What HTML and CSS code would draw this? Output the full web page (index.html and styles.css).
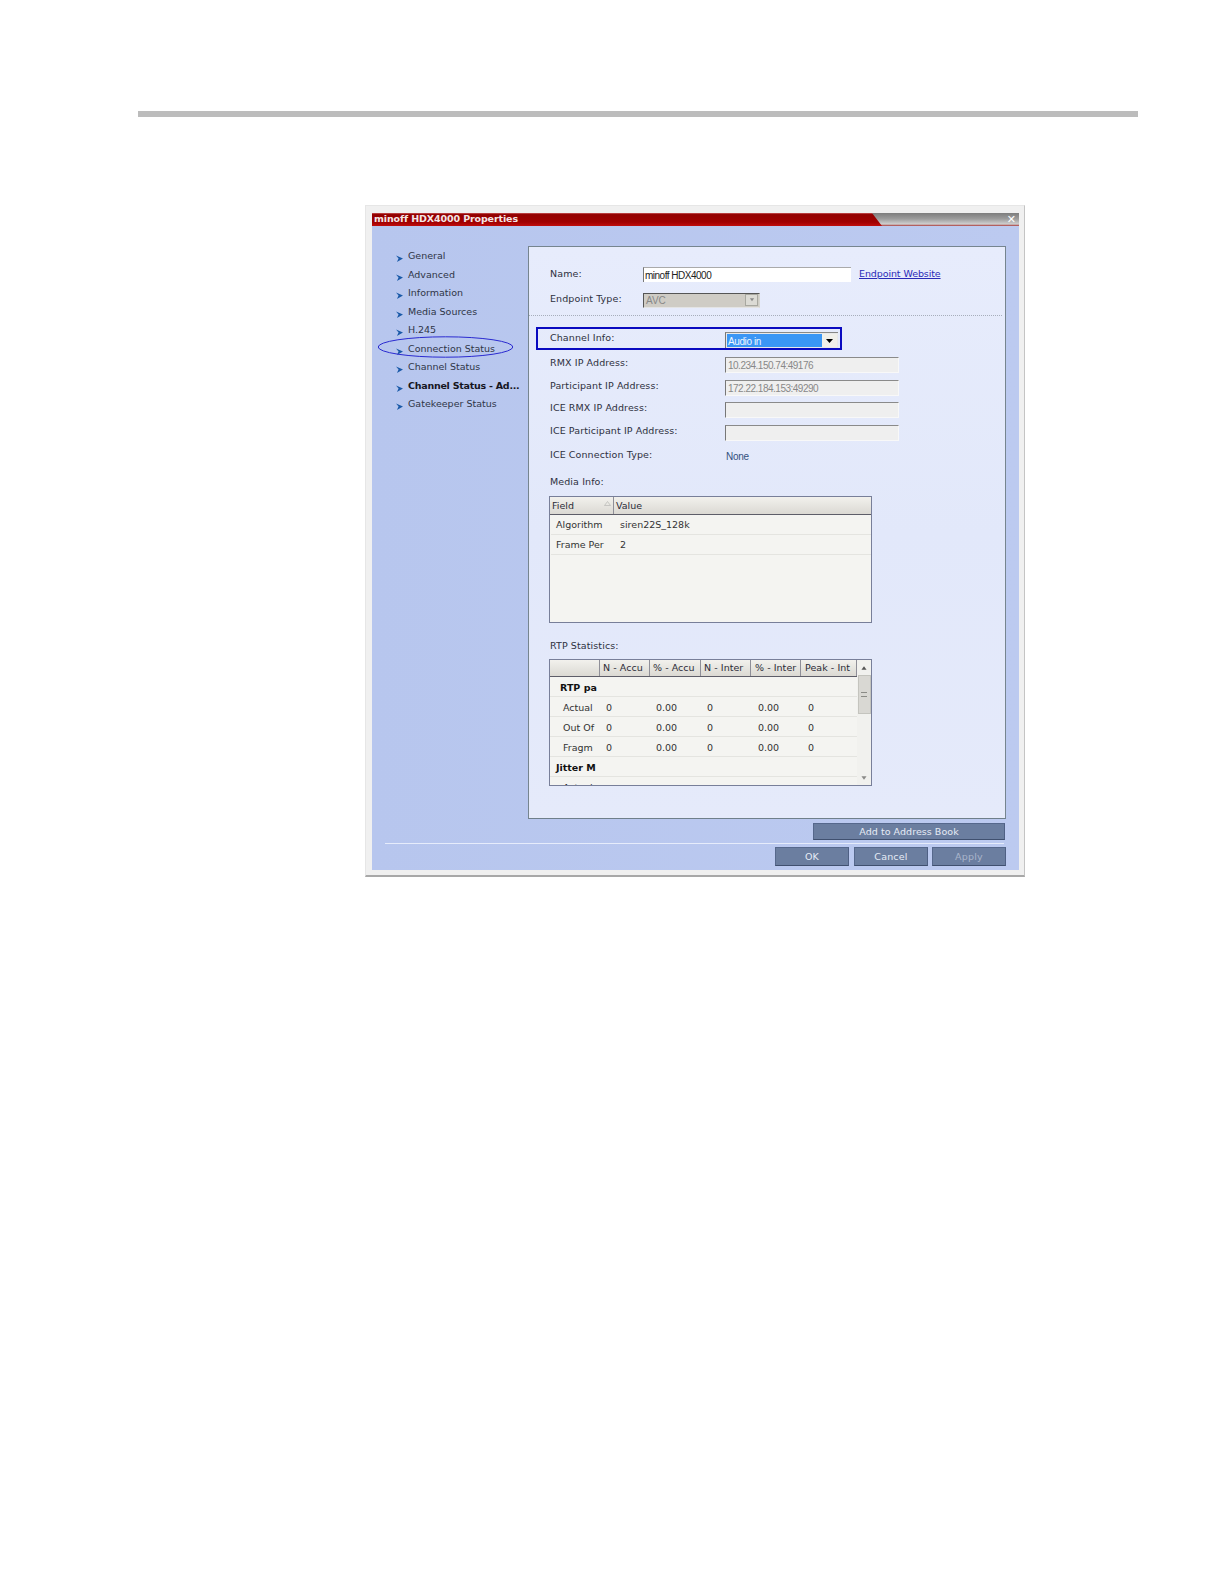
FILE: index.html
```html
<!DOCTYPE html>
<html lang="en">
<head>
<meta charset="utf-8">
<title>minoff HDX4000 Properties</title>
<link rel="stylesheet" href="styles.css">
</head>
<body>
<div class="page-rule"></div>
<div class="window">
  <div class="titlebar">
    <div class="title">minoff HDX4000 Properties</div>
    <div class="close">✕</div>
  </div>
  <div class="body">
    <div class="upper">
      <nav class="side">
        <div class="nav-item"><svg class="chev" viewBox="0 0 6 6"><path d="M0 0.4 L6 3 L0.8 6 L2.2 3 Z"/></svg>General</div>
        <div class="nav-item"><svg class="chev" viewBox="0 0 6 6"><path d="M0 0.4 L6 3 L0.8 6 L2.2 3 Z"/></svg>Advanced</div>
        <div class="nav-item"><svg class="chev" viewBox="0 0 6 6"><path d="M0 0.4 L6 3 L0.8 6 L2.2 3 Z"/></svg>Information</div>
        <div class="nav-item"><svg class="chev" viewBox="0 0 6 6"><path d="M0 0.4 L6 3 L0.8 6 L2.2 3 Z"/></svg>Media Sources</div>
        <div class="nav-item"><svg class="chev" viewBox="0 0 6 6"><path d="M0 0.4 L6 3 L0.8 6 L2.2 3 Z"/></svg>H.245</div>
        <div class="nav-item"><svg class="chev" viewBox="0 0 6 6"><path d="M0 0.4 L6 3 L0.8 6 L2.2 3 Z"/></svg>Connection Status
          <svg class="ellipse" viewBox="0 0 136 22"><ellipse cx="68" cy="11" rx="67.3" ry="10.2"/></svg>
        </div>
        <div class="nav-item"><svg class="chev" viewBox="0 0 6 6"><path d="M0 0.4 L6 3 L0.8 6 L2.2 3 Z"/></svg>Channel Status</div>
        <div class="nav-item active"><svg class="chev" viewBox="0 0 6 6"><path d="M0 0.4 L6 3 L0.8 6 L2.2 3 Z"/></svg>Channel Status - Ad...</div>
        <div class="nav-item"><svg class="chev" viewBox="0 0 6 6"><path d="M0 0.4 L6 3 L0.8 6 L2.2 3 Z"/></svg>Gatekeeper Status</div>
      </nav>
      <main class="panel">
        <div class="top-form">
          <div class="top-row">
            <span class="label top-label name-label">Name:</span>
            <span class="name-input">minoff HDX4000</span>
            <a class="site-link">Endpoint Website</a>
          </div>
          <div class="top-row">
            <span class="label top-label type-label">Endpoint Type:</span>
            <span class="type-select">AVC<span class="type-btn"><svg viewBox="0 0 7 4"><path d="M1 0 H6 L3.5 3.5 Z"/></svg></span></span>
          </div>
        </div>
        <div class="dotted"></div>
        <div class="highlight">
          <span class="label field-label">Channel Info:</span>
          <span class="channel-select"><span class="channel-value">Audio in</span><span class="channel-btn"><svg viewBox="0 0 7 4"><path d="M0 0 H7 L3.5 4 Z"/></svg></span></span>
        </div>
        <div class="fields">
          <div class="field-row"><span class="label field-label">RMX IP Address:</span><span class="ro-input">10.234.150.74:49176</span></div>
          <div class="field-row"><span class="label field-label">Participant IP Address:</span><span class="ro-input">172.22.184.153:49290</span></div>
          <div class="field-row"><span class="label field-label">ICE RMX IP Address:</span><span class="ro-input"></span></div>
          <div class="field-row"><span class="label field-label">ICE Participant IP Address:</span><span class="ro-input"></span></div>
          <div class="field-row conn-row"><span class="label field-label">ICE Connection Type:</span><span class="none-value">None</span></div>
        </div>
        <div class="label section-label">Media Info:</div>
        <div class="table media-table">
          <div class="media-row media-head">
            <div class="head-cell field-head">Field<svg class="sort" viewBox="0 0 7 5"><path d="M0.5 4.5 H6.5 L3.5 0.5 Z"/></svg></div>
            <div class="head-cell">Value</div>
          </div>
          <div class="media-row"><div class="media-name">Algorithm</div><div class="media-val">siren22S_128k</div></div>
          <div class="media-row"><div class="media-name">Frame Per</div><div class="media-val">2</div></div>
        </div>
        <div class="label section-label rtp-label">RTP Statistics:</div>
        <div class="table rtp-table">
          <div class="rtp-main">
            <div class="rtp-row rtp-head">
              <div class="head-cell blank"></div>
              <div class="head-cell">N - Accu</div>
              <div class="head-cell">% - Accu</div>
              <div class="head-cell">N - Inter</div>
              <div class="head-cell">% - Inter</div>
              <div class="head-cell">Peak - Int</div>
            </div>
            <div class="rtp-row"><div class="group sub-group">RTP pa</div></div>
            <div class="rtp-row"><div class="rn">Actual</div><div class="rv first">0</div><div class="rv">0.00</div><div class="rv">0</div><div class="rv">0.00</div><div class="rv">0</div></div>
            <div class="rtp-row"><div class="rn">Out Of</div><div class="rv first">0</div><div class="rv">0.00</div><div class="rv">0</div><div class="rv">0.00</div><div class="rv">0</div></div>
            <div class="rtp-row"><div class="rn">Fragm</div><div class="rv first">0</div><div class="rv">0.00</div><div class="rv">0</div><div class="rv">0.00</div><div class="rv">0</div></div>
            <div class="rtp-row"><div class="group">Jitter M</div></div>
            <div class="rtp-row"><div class="rn">Actual</div></div>
          </div>
          <div class="scrollbar">
            <svg class="sb-arrow" viewBox="0 0 7 4"><path d="M0.5 4 H6.5 L3.5 0 Z"/></svg>
            <div class="sb-thumb"><span class="grip"></span></div>
            <svg class="sb-arrow down" viewBox="0 0 7 4"><path d="M0.5 0 H6.5 L3.5 4 Z"/></svg>
          </div>
        </div>
      </main>
    </div>
    <div class="book-row"><button class="btn book">Add to Address Book</button></div>
    <div class="foot-line"></div>
    <div class="foot-row">
      <button class="btn act ok">OK</button>
      <button class="btn act">Cancel</button>
      <button class="btn act dim">Apply</button>
    </div>
  </div>
</div>
</body>
</html>
```
FILE: styles.css
```css
* { box-sizing: border-box; }
html, body { margin: 0; padding: 0; background: #fff; }
body { height: 1584px; overflow: hidden; font-family: "DejaVu Sans", sans-serif; font-size: 9.5px; color: #2c2c3c; }

.page-rule { width: 1000px; height: 6px; margin: 111px 0 0 138px; background: #bcbcbc; }

.window {
  width: 660px; height: 672px; margin: 88px 0 0 365px;
  padding: 7px 5px 5px 6px;
  background: #f0f0f0;
  border: 1px solid #e6e6e6;
  border-right-color: #c4c4c4;
  border-bottom: 2px solid #a8a8a8;
  display: flex; flex-direction: column;
}

.titlebar {
  height: 13px; flex: none; position: relative;
  background: linear-gradient(#7d7d7d, #9c9c9c 45%, #cfcfcf 85%, #a83a3a);
  display: flex; justify-content: space-between; align-items: center;
}
.title {
  width: 510px; height: 13px; padding-left: 2px;
  background: linear-gradient(#c9585a 0, #920000 12%, #a00000 70%, #c00c0c);
  clip-path: polygon(0 0, 500px 0, 510px 100%, 0 100%);
  color: #f4e6e6; font-weight: bold; font-size: 9.5px; letter-spacing: -0.12px; line-height: 12px; white-space: nowrap;
}
.close { color: #fff; font-size: 11px; font-weight: bold; line-height: 13px; padding-right: 3px; }

.body {
  flex: 1; display: flex; flex-direction: column;
  background: linear-gradient(90deg, #b7c6ee, #bccaf0);
  position: relative;
}
.upper { display: flex; height: 593px; flex: none; padding-top: 20px; }

.side { width: 156px; flex: none; padding-top: 1px; }
.nav-item {
  height: 18.5px; line-height: 18.5px; padding-left: 36px; position: relative;
  color: #2f3547; white-space: nowrap;
}
.nav-item.active { font-weight: bold; color: #16161f; letter-spacing: -0.25px; }
.chev { position: absolute; left: 23.5px; top: 8px; width: 7px; height: 7px; fill: #1a5aa8; }
.ellipse { position: absolute; left: 5px; top: -4px; width: 137px; height: 22px; fill: none; stroke: #2a2ad0; stroke-width: 1; overflow: visible; }

.panel {
  width: 478px; height: 573px; flex: none;
  background: linear-gradient(#e7ecfc, #e2e8fa 50%, #e5eafa);
  border: 1px solid #76858f;
  border-bottom-color: #6f7f8a;
  padding-top: 20px;
  display: flex; flex-direction: column;
}
.label { color: #2e3040; letter-spacing: 0.1px; white-space: nowrap; }

.top-form { padding-left: 21px; display: flex; flex-direction: column; gap: 11px; }
.top-row { display: flex; align-items: center; height: 15px; }
.top-label { width: 93px; flex: none; }
.name-label { margin-bottom: 2px; }
.type-label { margin-bottom: 4px; }
.name-input {
  width: 208px; height: 15px; background: #fff;
  border-left: 1px solid #777; border-top: 1px solid #aaa;
  font: 10px/15px "Liberation Sans", sans-serif; letter-spacing: -0.5px; color: #222; padding-left: 1px;
}
.site-link { margin: 0 0 2px 8px; color: #2a2ab8; text-decoration: underline; white-space: nowrap; letter-spacing: -0.1px; }
.type-select {
  width: 117px; height: 15px; position: relative; background: #cfccc5;
  border: 1px solid #555; border-right-color: #d6d6d0; border-bottom-color: #e4e4e4;
  font: 10px/14px "Liberation Sans", sans-serif; color: #888; padding-left: 2px;
  display: flex; justify-content: space-between;
}
.type-btn { width: 13px; height: 12px; margin: 0 1px; background: #dcdbd5; border: 1px solid #a8a8a0; display: flex; align-items: center; justify-content: center; }
.type-btn svg { width: 6px; height: 4px; fill: #8a8a8a; }

.dotted { margin: 7px 3px 0 0; border-top: 1px dotted #a7aebb; height: 0; }

.highlight {
  margin: 11px 0 0 7px; width: 306px; height: 23px; flex: none;
  border: 2px solid #0a0ac0; padding-left: 12px;
  display: flex; align-items: flex-end;
}
.highlight .field-label { align-self: center; margin-top: -2px; }
.field-label { width: 175px; flex: none; }
.channel-select {
  width: 113px; height: 16px; display: flex; padding: 1px;
  background: #e8e8e8; border-left: 1px solid #777; border-top: 1px solid #888;
}
.channel-value { flex: 1; background: #3a96f5; color: #eef6ff; font: 10px/15px "Liberation Sans", sans-serif; letter-spacing: -0.4px; padding-left: 1px; }
.channel-btn { width: 15px; background: #f0efea; display: flex; align-items: center; justify-content: center; }
.channel-btn svg { width: 7px; height: 4px; fill: #000; }

.fields { padding-left: 21px; margin-top: 7px; display: flex; flex-direction: column; }
.field-row { height: 22.7px; display: flex; align-items: flex-start; }
.field-row .field-label { line-height: 11px; }
.ro-input {
  width: 174px; height: 16px; background: #efefef;
  border-left: 1px solid #777; border-top: 1px solid #8a8a8a;
  border-right: 1px solid #f8f8f8; border-bottom: 1px solid #f8f8f8;
  font: 10px/15px "Liberation Sans", sans-serif; letter-spacing: -0.5px; color: #888; padding-left: 2px;
}
.conn-row { margin-top: 1px; height: 20px; }
.none-value { font: 10px/14px "Liberation Sans", sans-serif; color: #34507e; letter-spacing: -0.3px; padding-left: 1px; margin-top: 1px; }

.section-label { margin: 7px 0 0 21px; line-height: 12px; height: 12px; }

.table { border: 1px solid #787f99; background: #f4f4f1; overflow: hidden; width: 323px; margin-left: 20px; flex: none; }
.media-table { height: 127px; margin-top: 8px; }
.media-row { display: grid; grid-template-columns: 64px 1fr; height: 20px; border-bottom: 1px solid #e4e4e0; align-items: center; margin-left: 1px; }
.media-head { height: 18px; margin-left: 0; background: linear-gradient(#f2f1ed, #dbd9d3); border-bottom: 1px solid #5d5d68; }
.head-cell { height: 100%; line-height: 17px; padding-left: 2px; border-right: 1px solid #8f8f98; color: #2c2c38; white-space: nowrap; overflow: hidden; position: relative; }
.media-head .head-cell:last-child { border-right: 0; }
.sort { position: absolute; right: 2px; top: 4px; width: 7px; height: 5px; fill: none; stroke: #b8b8b4; stroke-width: 0.7; }
.media-name { padding-left: 5px; color: #333; white-space: nowrap; }
.media-val { padding-left: 5px; color: #333; }

.rtp-label { margin-top: 17px; }
.rtp-table { height: 127px; margin-top: 7px; display: flex; }
.rtp-main { width: 307px; flex: none; }
.rtp-row { display: grid; grid-template-columns: 50px 50px 51px 50px 50px 56px; height: 20px; padding-top: 2px; border-bottom: 1px solid #e4e4e0; align-items: center; color: #333; }
.rtp-head { height: 17px; padding-top: 0; background: linear-gradient(#f2f1ed, #dbd9d3); border-bottom: 1px solid #5d5d68; }
.rtp-head .head-cell { line-height: 16px; padding-left: 3px; letter-spacing: 0.05px; }
.rtp-head .head-cell:nth-child(n+5) { padding-left: 4px; }
.rtp-head .blank { padding: 0; }
.group { grid-column: 1 / -1; font-weight: bold; color: #111; padding-left: 6px; }
.sub-group { padding-left: 10px; }
.rn { padding-left: 13px; overflow: hidden; white-space: nowrap; }
.rv { padding-left: 6px; }
.rv:nth-child(n+5) { padding-left: 7px; }

.scrollbar { flex: 1; background: #f1f1ee; display: flex; flex-direction: column; align-items: center; position: relative; padding-top: 6px; }
.sb-arrow { width: 6px; height: 4px; fill: #555; flex: none; }
.sb-thumb { width: 13px; height: 39px; margin-top: 5px; background: #d9d8d3; border: 1px solid #c4c4be; display: flex; align-items: center; justify-content: center; }
.grip { width: 6px; height: 5px; border-top: 1px solid #8b8b86; border-bottom: 1px solid #8b8b86; }
.sb-arrow.down { margin-top: auto; margin-bottom: 5px; fill: #8a8a88; }

.book-row { display: flex; justify-content: flex-end; padding-right: 14px; margin-top: 4px; }
.btn {
  font-family: "DejaVu Sans", sans-serif; font-size: 9.5px; color: #e6ebf5; letter-spacing: 0.2px;
  background: #6b7ea0; border: 1px solid #56688c; border-right-color: #4f6084; border-bottom-color: #40506f; padding: 0; margin: 0;
}
.book { width: 192px; height: 17px; line-height: 15px; letter-spacing: 0.05px; }
.foot-line { height: 1px; background: #e6ecfb; margin: 3px 15px 0 13px; flex: none; }
.foot-row { display: flex; justify-content: flex-end; gap: 4px; padding-right: 13px; margin-top: 3px; }
.act { width: 74px; height: 19px; }
.ok { margin-right: 1px; }
.dim { color: #aab5cb; }
```
